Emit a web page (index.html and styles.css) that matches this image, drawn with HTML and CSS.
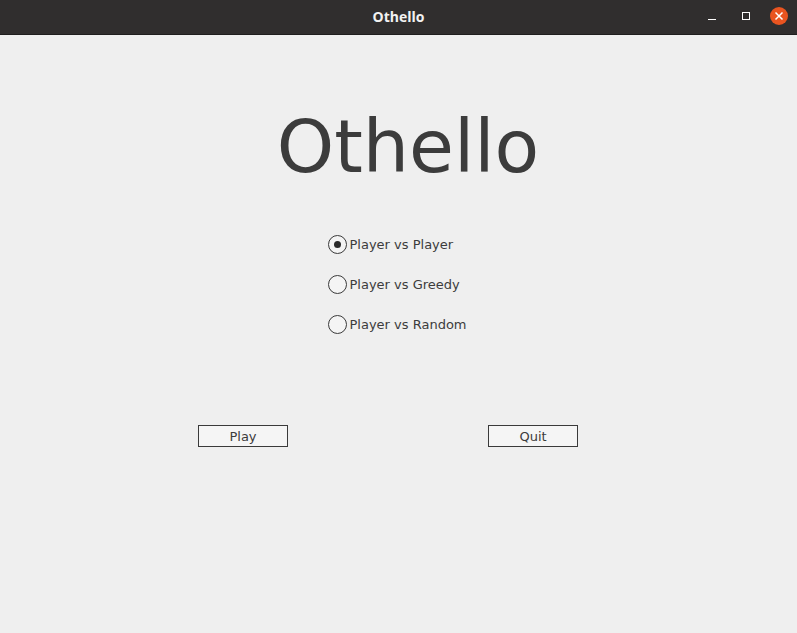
FILE: index.html
```html
<!DOCTYPE html>
<html>
<head>
<meta charset="utf-8">
<link rel="stylesheet" href="styles.css">
</head>
<body>
<div class="window">
  <header class="titlebar">
    <span class="title">Othello</span>
    <div class="controls">
      <span class="ctl min"><svg width="10" height="10" viewBox="0 0 10 10"><path d="M1 8.5H9" stroke="#fff" stroke-width="1"/></svg></span>
      <span class="ctl max"><svg width="10" height="10" viewBox="0 0 10 10"><rect x="1.5" y="1.5" width="7" height="7" fill="none" stroke="#fff" stroke-width="1"/></svg></span>
      <span class="ctl close"><svg width="18" height="18" viewBox="0 0 18 18"><circle cx="9" cy="9" r="9" fill="#e95420"/><path d="M5.5 5.5L12.5 12.5M12.5 5.5L5.5 12.5" stroke="#fff" stroke-width="1.5"/></svg></span>
    </div>
  </header>
  <main class="content">
    <h1 class="heading">Othello</h1>
    <div class="options">
      <label class="option"><span class="radio checked"><span class="dot"></span></span>Player vs Player</label>
      <label class="option"><span class="radio"></span>Player vs Greedy</label>
      <label class="option"><span class="radio"></span>Player vs Random</label>
    </div>
    <div class="buttons">
      <button class="btn">Play</button>
      <button class="btn">Quit</button>
    </div>
  </main>
</div>
</body>
</html>
```

FILE: styles.css
```css
* { box-sizing: border-box; }
html, body { margin: 0; padding: 0; }
body {
  width: 797px;
  height: 633px;
  overflow: hidden;
  background: #efefef;
  font-family: "DejaVu Sans", sans-serif;
  color: #3c3c3c;
}
.window { display: flex; flex-direction: column; height: 633px; }
.titlebar {
  position: relative;
  height: 35px;
  background: #302e2e;
  border-bottom: 1px solid #1f1e1e;
  display: flex;
  align-items: center;
  justify-content: center;
  flex-shrink: 0;
}
.title {
  font-family: "Open Sans", "DejaVu Sans", sans-serif;
  font-weight: 700;
  font-size: 14px;
  color: #f2f2f2;
  margin-top: -1px;
}
.controls {
  position: absolute;
  right: 9px;
  top: 7px;
  display: flex;
  align-items: center;
  gap: 0;
}
.ctl { display: flex; align-items: center; justify-content: center; }
.ctl.min { width: 10px; height: 18px; margin-right: 24px; }
.ctl.max { width: 10px; height: 18px; margin-right: 19px; }
.ctl.close { width: 18px; height: 18px; }
.content {
  flex: 1;
  display: flex;
  flex-direction: column;
  align-items: center;
}
.heading {
  margin: 69px 0 0 19px;
  font-weight: 400;
  font-size: 73px;
  line-height: 86px;
  color: #3c3c3c;
  letter-spacing: 0;
}
.options {
  margin: 45px 0 0 0;
  display: flex;
  flex-direction: column;
  gap: 22px;
  width: 142px;
}
.option {
  display: flex;
  align-items: center;
  height: 18px;
  font-size: 13px;
  color: #3c3c3c;
}
.radio {
  width: 19px;
  height: 19px;
  border: 1px solid #3a3a3a;
  border-radius: 50%;
  margin-right: 3px;
  display: flex;
  align-items: center;
  justify-content: center;
  background: #f4f4f4;
  flex-shrink: 0;
}
.dot { width: 7px; height: 7px; border-radius: 50%; background: #2a2a2a; }
.buttons {
  margin: 92px 0 0 -21px;
  display: flex;
  gap: 200px;
}
.btn {
  width: 90px;
  height: 22px;
  border: 1px solid #3a3a3a;
  background: #f5f5f5;
  font-family: "DejaVu Sans", sans-serif;
  font-size: 13px;
  color: #3c3c3c;
  padding: 0;
  border-radius: 0;
}
```
